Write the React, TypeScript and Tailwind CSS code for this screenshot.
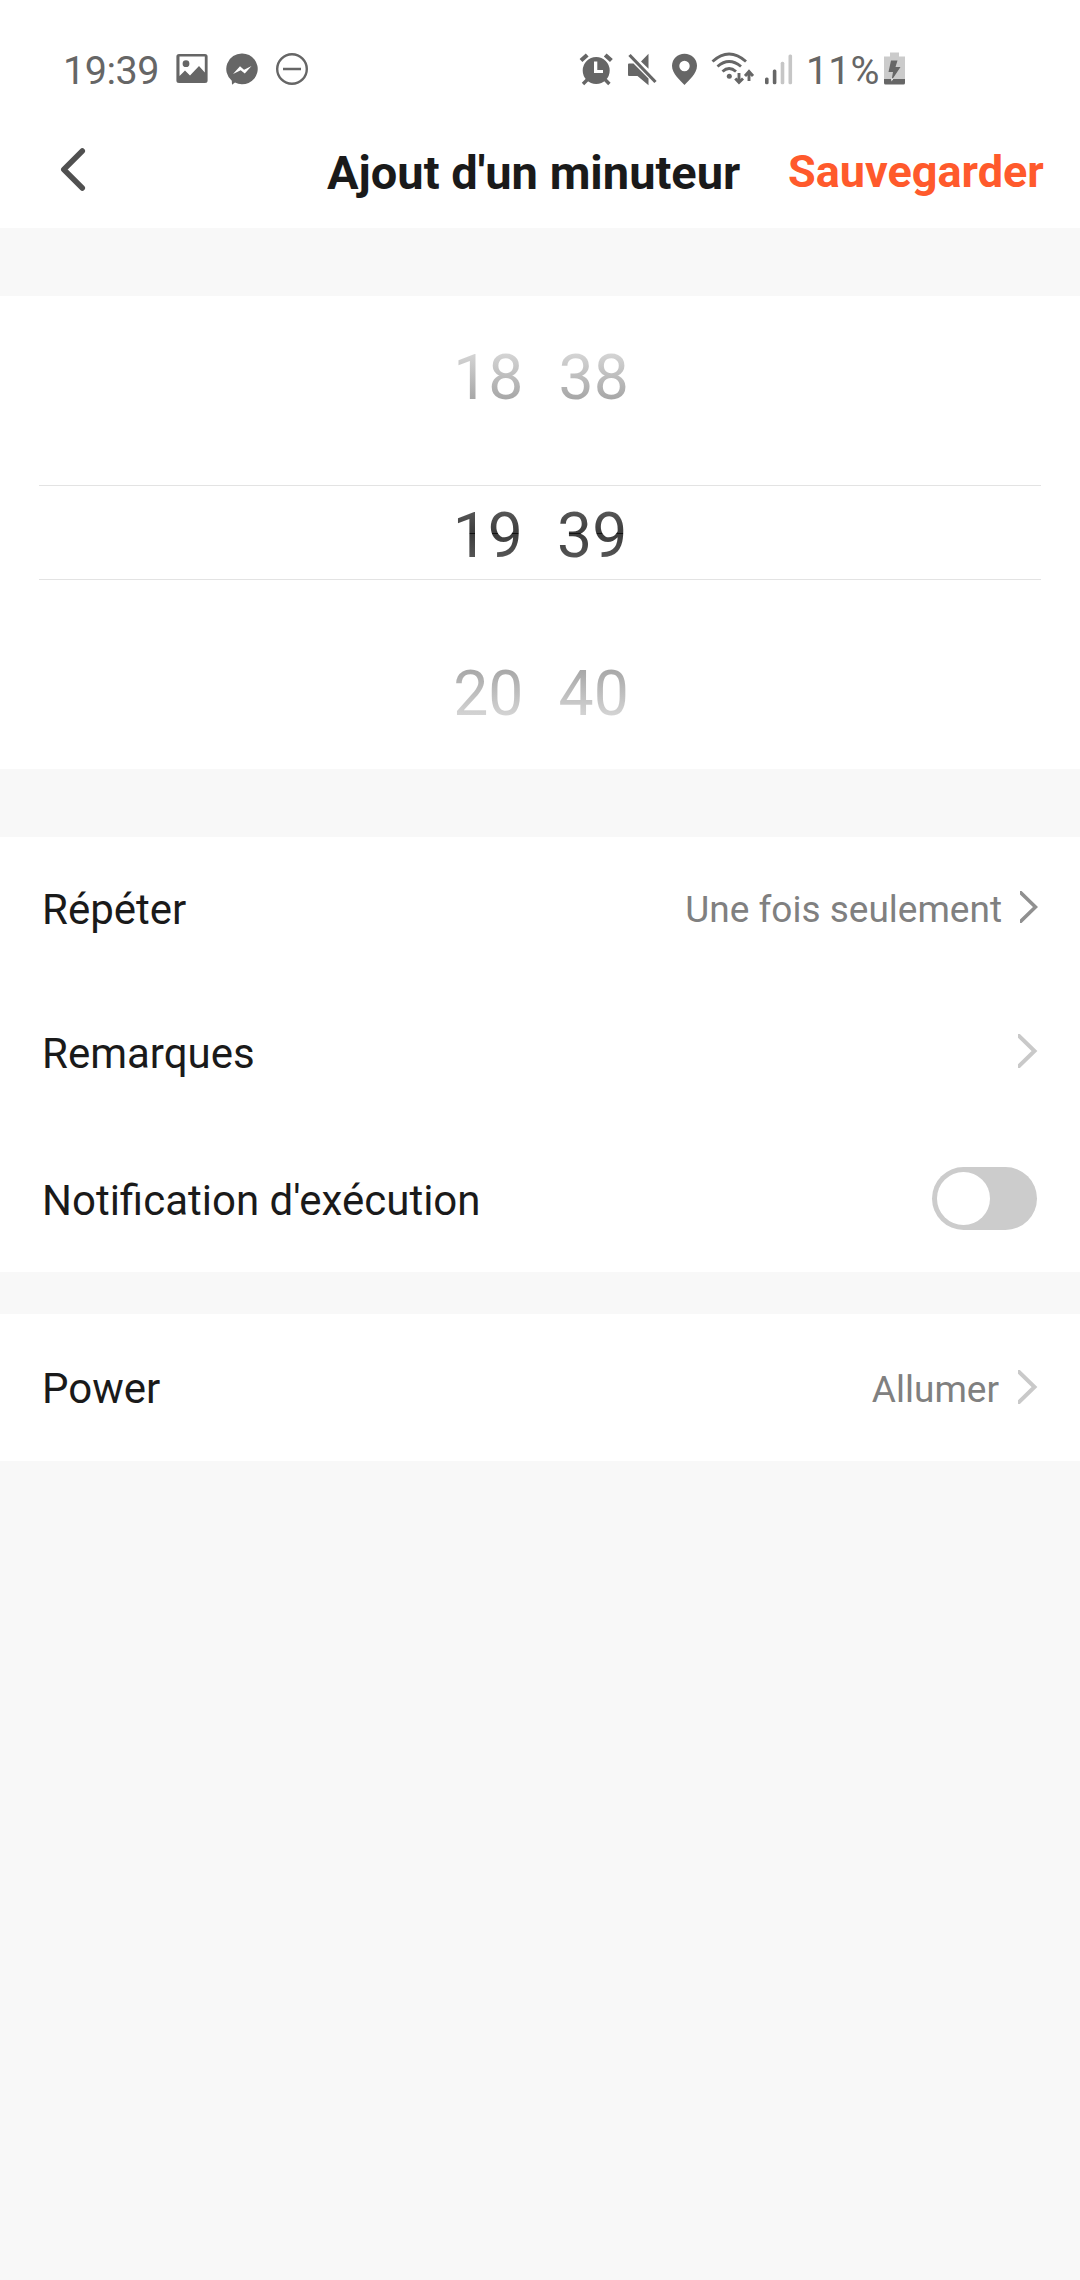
import React from "react";

const ICON = "#666666";

function StatusBar() {
  return (
    <div className="flex h-[114px] items-start pt-[45px] text-[#666666]">
      <div className="ml-[63px] mt-px flex h-[50px] w-[113px] items-center whitespace-nowrap text-[39.500px] leading-none tracking-[-0.500px]">19:39</div>
      <svg className="mt-[7px] block" width="134" height="34" viewBox="176 52 134 34" fill={ICON}>
        <path fillRule="evenodd" d="M179 54H205Q207.600 54 207.600 56.500V80.500Q207.600 83 205 83H179Q176.400 83 176.400 80.500V56.500Q176.400 54 179 54ZM179.500 56.500V76L185 70.500L190 75.500L199 66L204.800 72.500V56.500ZM186 60.300A3.400 3.400 0 1 1 186 67.100A3.400 3.400 0 1 1 186 60.300Z" />
        <path fillRule="evenodd" d="M242.300 53.500A15.600 15.400 0 1 1 235 82.600L232 84.800L231.800 80.700A15.500 15.400 0 0 1 242.300 53.500ZM233 74L240 66.300L244 69.700L251.500 66L244.800 73.500L240.700 70.200Z" />
        <circle cx="292" cy="69" r="14.800" fill="none" stroke={ICON} strokeWidth="2.400" />
        <path d="M283 69H301" stroke={ICON} strokeWidth="2.500" />
      </svg>
      <svg className="ml-[268px] mt-[5px] block" width="222" height="38" viewBox="578 50 222 38" fill={ICON}>
        <path fillRule="evenodd" d="M596.200 57A13.400 13.400 0 1 1 596.200 84A13.400 13.400 0 1 1 596.200 57ZM594 61.500V73H603V70H597.300V61.500Z" />
        <path d="M581 60.500L587.200 55M605.200 55L611.400 60.500" stroke={ICON} strokeWidth="4.200" />
        <path d="M583 84L587.500 79.500M609.400 84L605 79.500" stroke={ICON} strokeWidth="3.400" />
        <path d="M628 64.500Q628 63.500 629 63.500H633.500L648.500 78.500V85.300L637.500 76H629Q628 76 628 75ZM641 61.500L648.500 53.700V68.800Z" />
        <path d="M629.500 55L655.500 82" stroke={ICON} strokeWidth="3.200" />
        <path fillRule="evenodd" d="M684.500 53.700C691.500 53.700 697 59 697 65.800C697 74 688.500 80.500 684.500 85C680.500 80.500 672 74 672 65.800C672 59 677.500 53.700 684.500 53.700ZM684.500 60.800A5.200 5.200 0 1 0 684.500 71.200A5.200 5.200 0 1 0 684.500 60.800Z" />
        <g fill="none" stroke={ICON} strokeWidth="2.900">
          <path d="M712.500 61.500Q729 46.500 746 61.500" />
          <path d="M717.500 66.500Q729 56.500 741 66.500" />
          <path d="M722.500 71.500Q729 65.500 736 71.500" />
          <path d="M739 73V82M735.300 78.500L739 82.500L743 78.500" />
          <path d="M749 81V72M745 76L749 71.500L753 76" />
        </g>
        <circle cx="729.300" cy="76.300" r="2.500" />
        <rect x="765" y="77.500" width="3.600" height="6.800" rx="1.500" />
        <rect x="772.800" y="69.500" width="3.600" height="14.800" rx="1.500" />
        <rect x="780.700" y="61.800" width="3.600" height="22.500" rx="1.500" fill="#c6c6c6" />
        <rect x="788.500" y="54.500" width="3.600" height="29.800" rx="1.500" fill="#c6c6c6" />
      </svg>
      <div className="ml-[6px] mt-px flex h-[50px] w-[77px] items-center whitespace-nowrap text-[39.500px] leading-none">11%</div>
      <svg className="mt-[6px] block" width="24" height="36" viewBox="883 51 24 36">
        <path d="M890 52.500H899V56.500H905V79H884V56.500H890Z" fill="#cbcbcb" />
        <path d="M884 79H905V83Q905 84.500 903.500 84.500H885.500Q884 84.500 884 83Z" fill={ICON} />
        <path d="M891 60.500H897.500L895.500 67H900.500L891.500 80.500L893 72H888.500Z" fill={ICON} />
        <path d="M891.200 78.500L893.500 78.500L891.500 81.500Z" fill="#fff" />
      </svg>
    </div>
  );
}

function Header() {
  return (
    <header className="flex h-[114px] items-center">
      <button className="ml-[56px] -mt-[4px] flex w-[40px] items-center">
        <svg className="block" width="34" height="50" viewBox="0 0 34 50" fill="none" stroke="#505050" strokeWidth="5.500" strokeLinecap="round" strokeLinejoin="round">
          <path d="M26.300 7L7.800 25.500L26.300 44" />
        </svg>
      </button>
      <h1 className="ml-[231px] mt-[3px] w-[461px] whitespace-nowrap text-[47px] leading-none font-bold text-[#1a1a1a]">Ajout d'un minuteur</h1>
      <button className="whitespace-nowrap text-[45px] leading-none font-bold text-[#ff5a2c]">Sauvegarder</button>
    </header>
  );
}

const wheel = [
  { h: "18", m: "38", size: "pl-[2px] gap-[35px] text-[62.500px]", tone: "bg-[linear-gradient(to_bottom,#d4d4d4_57px,#a6a6a6_103px)]" },
  { h: "19", m: "39", size: "gap-[34px] text-[62.500px]", tone: "bg-[linear-gradient(to_bottom,#565656_57px,#3c3c3c_78px,#111_78px,#111_79px,#3c3c3c_79px,#565656_103px)]" },
  { h: "20", m: "40", size: "pl-[2px] gap-[35px] text-[62.500px]", tone: "bg-[linear-gradient(to_bottom,#a8a8a8_57px,#d4d4d4_103px)]" },
];

function TimePicker() {
  return (
    <section className="relative flex h-[473px] flex-col bg-white pt-px">
      {wheel.map((r) => (
        <div key={r.h} className={"flex h-[158px] shrink-0 justify-center leading-[162px] " + r.size}>
          <span className={"bg-clip-text text-transparent " + r.tone}>{r.h}</span>
          <span className={"bg-clip-text text-transparent " + r.tone}>{r.m}</span>
        </div>
      ))}
      <div className="absolute inset-x-[39px] top-[189px] h-[95px] border-y border-[#e3e3e3]" />
    </section>
  );
}

function Chevron({ dark = false }: { dark?: boolean }) {
  return dark ? (
    <svg className="block" width="18" height="32" viewBox="0 0 18 32" fill="none" stroke="#909090" strokeWidth="3.600">
      <path d="M-1 0L15.500 16L-1 32" />
    </svg>
  ) : (
    <svg className="block" width="20" height="34" viewBox="0 0 20 34" fill="none" stroke="#c9c9c9" strokeWidth="4">
      <path d="M-1 0L16.500 17L-1 34" />
    </svg>
  );
}

function Row({ label, size, children }: { label: string; size: string; children: React.ReactNode }) {
  return (
    <div className={"flex items-center justify-between pl-[42px] pr-[42px] " + size}>
      <span className="text-[42px] leading-none text-[#1a1a1a]">{label}</span>
      <div className="flex items-center text-[37px] leading-none text-[#808080]">{children}</div>
    </div>
  );
}

export default function App() {
  return (
    <main className="h-[2280px] w-[1080px] overflow-hidden bg-[#f8f8f8] font-['Roboto',sans-serif]">
      <div className="h-[228px] bg-white">
        <StatusBar />
        <Header />
      </div>
      <div className="h-[68px]" />
      <TimePicker />
      <div className="h-[68px]" />
      <section className="h-[435px] bg-white">
        <Row label="Répéter" size="h-[145px]">
          <span className="mr-[18px]">Une fois seulement</span>
          <div className="-mt-[5px]"><Chevron dark /></div>
        </Row>
        <Row label="Remarques" size="h-[144px]">
          <div className="-mt-[6px]"><Chevron /></div>
        </Row>
        <Row label="Notification d'exécution" size="h-[146px] pt-[3px]">
          <div className="mr-px -mt-[5px] flex h-[63px] w-[105px] items-center rounded-full bg-[#cccccc] pl-[5px]">
            <div className="size-[53px] rounded-full bg-white" />
          </div>
        </Row>
      </section>
      <div className="h-[42px]" />
      <section className="h-[147px] bg-white">
        <Row label="Power" size="h-[147px] pt-[3px]">
          <span className="mr-[19px]">Allumer</span>
          <div className="-mt-[5px]"><Chevron /></div>
        </Row>
      </section>
    </main>
  );
}
